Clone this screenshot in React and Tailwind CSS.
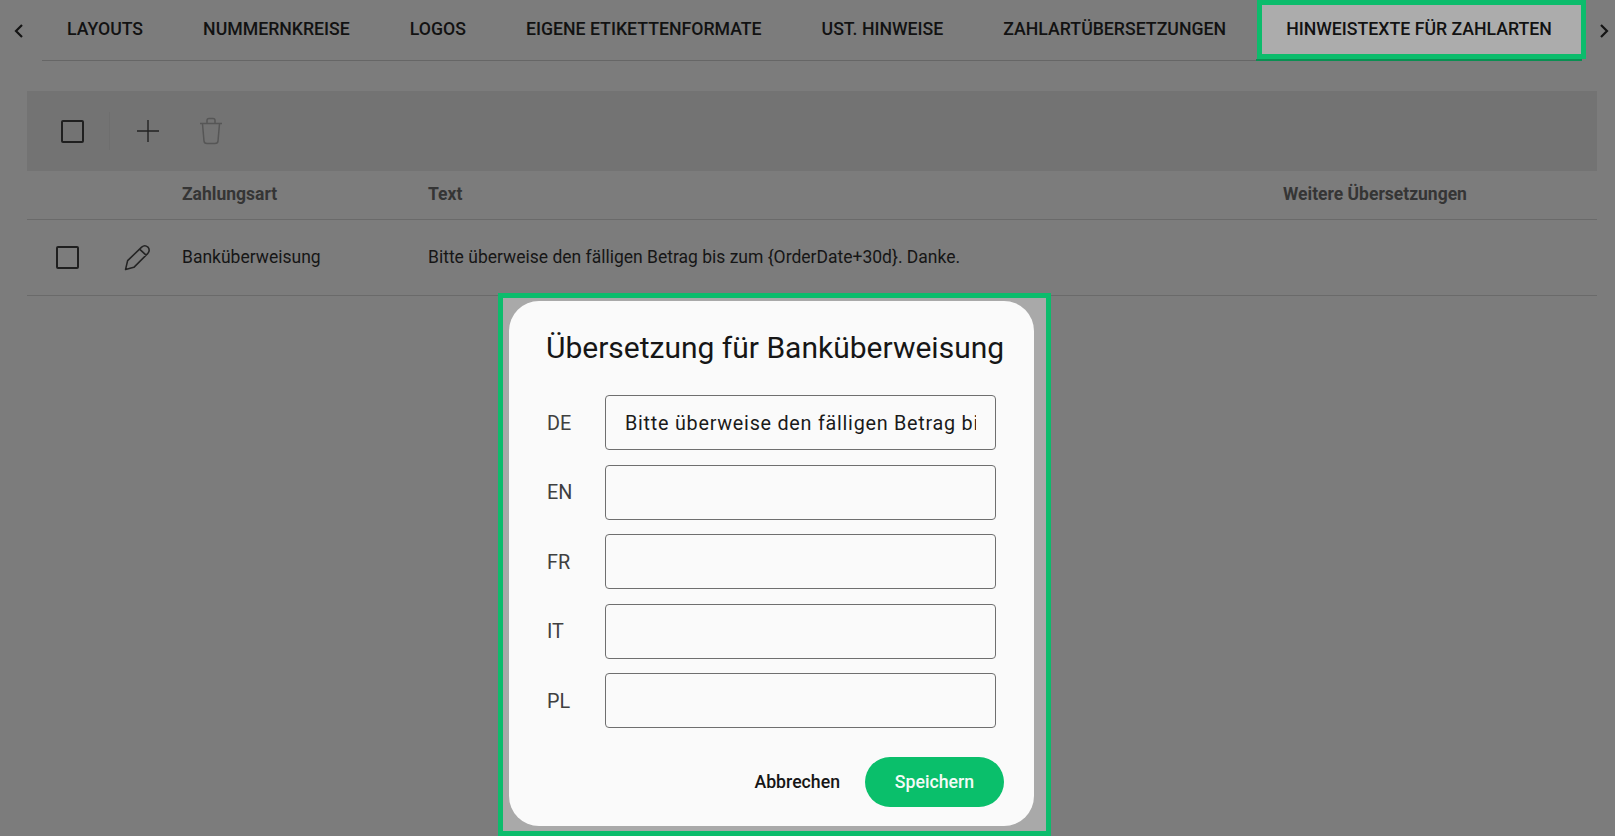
import React from 'react';

const tabs = ['LAYOUTS', 'NUMMERNKREISE', 'LOGOS', 'EIGENE ETIKETTENFORMATE', 'UST. HINWEISE', 'ZAHLARTÜBERSETZUNGEN'];
const languages = [
  { code: 'DE', value: 'Bitte überweise den fälligen Betrag bis zum {OrderDate+30d}. Danke.' },
  { code: 'EN', value: '' },
  { code: 'FR', value: '' },
  { code: 'IT', value: '' },
  { code: 'PL', value: '' },
];

function Chevron({ left }) {
  return (
    <svg width="10" height="16" viewBox="0 0 10 16" fill="none" stroke="#141414" strokeWidth="2.2">
      <path d={left ? 'M8 2 L2 8 L8 14' : 'M2 2 L8 8 L2 14'} />
    </svg>
  );
}

function Checkbox() {
  return <div className="w-[23px] h-[23px] border-2 border-[#1f1f1f] rounded-[2px]" />;
}

function TabBar() {
  return (
    <div className="h-[61px] flex items-start">
      <div className="w-[42px] h-[61px] flex items-center justify-center pr-[4px] pt-[1px]">
        <Chevron left />
      </div>
      <div className="flex flex-1 h-[61px] border-b border-[#666666]">
        {tabs.map((tab) => (
          <div key={tab} className="px-[30px] first:pl-[25px] h-[60px] pb-[2px] flex items-center whitespace-nowrap text-[17.7px] font-medium text-[#121212]">
            {tab}
          </div>
        ))}
        {/* active tab with the green highlight */}
        <div className="relative ml-auto w-[326px] h-[61px] border-b-[2px] border-[#0a8f52] flex items-center justify-center pb-[1px] text-[17.7px] font-medium text-[#121212]">
          <div className="absolute left-[1px] top-0 w-[329px] h-[59px] border-[5px] border-[#0cbc6c] bg-[#acacac]" />
          <span className="relative whitespace-nowrap">HINWEISTEXTE FÜR ZAHLARTEN</span>
        </div>
      </div>
      <div className="w-[33px] h-[61px] flex items-center justify-center pl-[11px] pt-[1px]">
        <Chevron />
      </div>
    </div>
  );
}

function PaymentTable() {
  return (
    <div className="mt-[30px] mx-[27px] w-[1570px]">
      <div className="h-[80px] bg-[#737373] flex items-center">
        <div className="w-[83px] h-[38px] flex items-center pl-[34px] border-r border-[#6e6e6e]">
          <Checkbox />
        </div>
        <svg className="ml-[26px]" width="24" height="24" viewBox="0 0 24 24" fill="none" stroke="#232323" strokeWidth="1.4">
          <path d="M12 1 V23 M1 12 H23" />
        </svg>
        <svg className="ml-[39px]" width="24" height="28" viewBox="0 0 24 28" fill="none" stroke="#565656" strokeWidth="1.5">
          <path d="M1 6.5 H23 M8 6 V3.5 Q8 1.5 10 1.5 H14 Q16 1.5 16 3.5 V6 M3.5 7 L5 24 Q5.2 26.5 8 26.5 H16 Q18.8 26.5 19 24 L20.5 7" />
        </svg>
      </div>
      <div className="h-[49px] flex items-center pb-[2px] border-b border-[#6a6a6a] text-[17.5px] font-bold text-[#353535]">
        <span className="ml-[155px] w-[246px]">Zahlungsart</span>
        <span className="w-[855px]">Text</span>
        <span>Weitere Übersetzungen</span>
      </div>
      <div className="h-[76px] flex items-center border-b border-[#6a6a6a] text-[17.5px] text-[#161616]">
        <div className="w-[97px] pl-[29px]">
          <Checkbox />
        </div>
        <svg width="27" height="27" viewBox="0 0 26 26" fill="none" stroke="#242424" strokeWidth="1.5" strokeLinejoin="round">
          <path d="M1.5 24.5 L3.5 16 L17 3 Q20 0.5 23 3 Q25.5 6 23 9 L9.5 22.5 Z M15 5 L21.5 11" />
        </svg>
        <span className="ml-[31px] w-[246px]">Banküberweisung</span>
        <span>Bitte überweise den fälligen Betrag bis zum {'{OrderDate+30d}'}. Danke.</span>
      </div>
    </div>
  );
}

function TranslationDialog() {
  return (
    <div className="absolute left-[498px] top-[293px] w-[553px] h-[543px] border-[5px] border-[#0cbc6c] bg-[#a9a9a9] pl-[6px] pt-[3px]">
      <div className="w-[525px] h-[525px] rounded-[30px] bg-[#fafafa] pl-[37px] pr-[30px] pt-[28px]">
        <h2 className="text-[30px] leading-[38px] text-[#161616] whitespace-nowrap">Übersetzung für Banküberweisung</h2>
        <div className="mt-[28px] flex flex-col gap-[14.5px]">
          {languages.map((lang) => (
            <div key={lang.code} className="flex items-center h-[55px]">
              <label className="w-[59px] pl-[1px] pt-[2px] text-[19.8px] text-[#404040]">{lang.code}</label>
              <input
                readOnly
                value={lang.value}
                className="w-[391px] h-[55px] px-[19px] pt-[1px] border border-[#6f6f6f] rounded-[4px] bg-transparent text-[19.8px] tracking-[0.74px] text-[#1a1a1a] outline-none"
              />
            </div>
          ))}
        </div>
        <div className="mt-[29px] flex items-center justify-end gap-[25px]">
          <button className="text-[17.7px] font-medium text-[#161616]">Abbrechen</button>
          <button className="w-[139px] h-[50px] rounded-full bg-[#0abf6b] text-[17.7px] font-medium text-[#f4fbf7]">Speichern</button>
        </div>
      </div>
    </div>
  );
}

export default function App() {
  return (
    <div className="relative w-[1615px] h-[836px] overflow-hidden bg-[#7c7c7c] font-['Roboto',sans-serif]">
      <TabBar />
      <PaymentTable />
      <TranslationDialog />
    </div>
  );
}
